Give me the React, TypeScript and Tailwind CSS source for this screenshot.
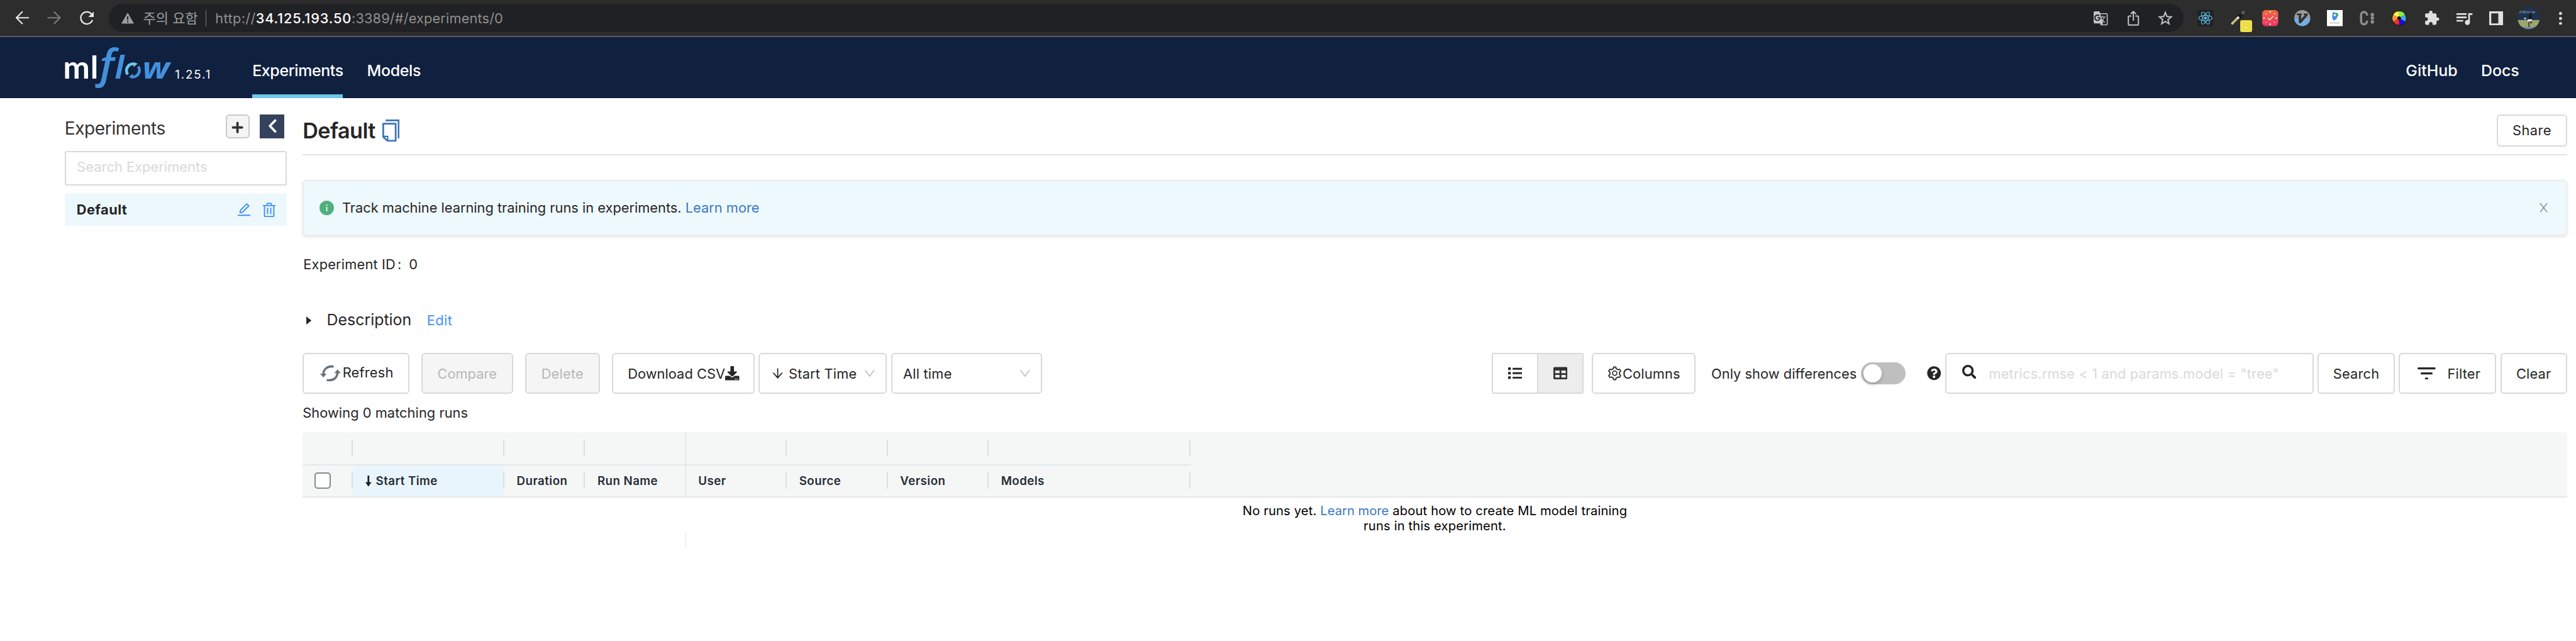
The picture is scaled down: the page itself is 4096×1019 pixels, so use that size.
import type { ReactNode } from "react";
import { AiOutlineArrowDown, AiOutlineDown, AiOutlineEdit, AiOutlineSetting } from "react-icons/ai";
import { FaDownload, FaList, FaQuestionCircle, FaSearch, FaTable } from "react-icons/fa";
import { MdExtension, MdGTranslate, MdQueueMusic } from "react-icons/md";
import { clsx } from "clsx";

/* ---------- browser toolbar ---------- */

function Cell({ children }: { children: ReactNode }) {
  return <div className="relative flex w-[51.34px] shrink-0 items-center justify-center">{children}</div>;
}

function ReactIcon() {
  return (
    <svg viewBox="0 0 32 32" className="size-[25.6px]">
      <rect width="32" height="32" rx="2" fill="#202124" />
      <g fill="none" stroke="#5fc3ea" strokeWidth="1.3">
        <ellipse cx="16" cy="16" rx="13.4" ry="5.2" />
        <ellipse cx="16" cy="16" rx="13.4" ry="5.2" transform="rotate(60 16 16)" />
        <ellipse cx="16" cy="16" rx="13.4" ry="5.2" transform="rotate(120 16 16)" />
      </g>
      <circle cx="16" cy="16" r="2.8" fill="#5fc3ea" />
    </svg>
  );
}

function PickerIcon() {
  return (
    <>
      <svg viewBox="0 0 32 32" className="size-[25.6px]" fill="none" strokeLinecap="round">
        <path d="M4.5 26.5 18 13" stroke="#e8e4d0" strokeWidth="4.4" />
        <path d="M5.5 26 13 18.500" stroke="#b9ab2d" strokeWidth="2.4" />
        <path d="M17 10l5 5M20 12l5-5" stroke="#17191b" strokeWidth="4" />
        <path d="M25.5 5.500l1-1" stroke="#5a5c5e" strokeWidth="6" />
      </svg>
      <div className="absolute top-[32px] left-[28.8px] flex size-[19.25px] items-center justify-center rounded-[3px] bg-[#ecdf4b]">
        <span className="mt-[4px] size-[2px] rounded-full bg-white" />
      </div>
    </>
  );
}

function ClockIcon() {
  return (
    <svg viewBox="0 0 32 32" className="size-[25.6px]" fill="none">
      <defs>
        <linearGradient id="clock" x1="0" y1="0" x2="0" y2="1">
          <stop offset="0" stopColor="#f16b3b" />
          <stop offset="1" stopColor="#ee3268" />
        </linearGradient>
      </defs>
      <rect width="32" height="32" rx="7" fill="url(#clock)" />
      <g fill="#fff">
        <circle cx="16" cy="3.800" r="1.500" />
        <circle cx="16" cy="28.200" r="1.500" />
        <circle cx="3.800" cy="16" r="1.500" />
        <circle cx="28.200" cy="16" r="1.500" />
        <circle cx="7.500" cy="7.500" r="1.100" />
        <circle cx="24.500" cy="7.500" r="1.100" />
        <circle cx="7.500" cy="24.500" r="1.100" />
        <circle cx="24.500" cy="24.500" r="1.100" />
      </g>
      <path d="M11.500 16l3.500 3.500 7-7.500" stroke="#fff" strokeWidth="1.700" />
    </svg>
  );
}

function VimIcon() {
  return (
    <svg viewBox="0 0 32 32" className="size-[25.6px]">
      <path d="M0 16a16 16 0 0 1 32 0z" fill="#9b9b9b" />
      <path d="M0 16a16 16 0 0 0 32 0z" fill="#76aee0" />
      <path d="M5 7h10v3h-1.500v8L21 10h-2V7h8v3L13.500 26H9V10H5z" fill="#303134" />
    </svg>
  );
}

function BirdIcon() {
  return (
    <svg viewBox="0 0 32 32" className="size-[25.6px]">
      <rect width="32" height="32" fill="#fff" />
      <path d="M12 3.500c4 2 7 3 9 6 1 5-3 11-8 11-3-3-3-9-1-17z" fill="#3d8ff0" />
      <path d="M16 6c4-2 7 0 7 6-3-1-5-2-7-6z" fill="#3fb559" />
      <circle cx="15.500" cy="10" r="2.300" fill="#fff" />
      <path d="M6 25.500h20" stroke="#999" strokeWidth="2.500" strokeDasharray="3 1" opacity=".6" />
    </svg>
  );
}

function ColonIcon() {
  return (
    <svg viewBox="0 0 32 32" className="size-[25.6px]" fill="none">
      <path d="M17.500 10.500V9a6.500 6.500 0 0 0-13 0v14a6.500 6.500 0 0 0 13 0v-1.500" stroke="#8c8c8c" strokeWidth="5" transform="translate(0 1.600) scale(.9)" />
      <g fill="#8c8c8c">
        <circle cx="26.500" cy="9" r="3.500" />
        <circle cx="26.500" cy="16" r="3.500" />
        <circle cx="26.500" cy="23.500" r="3.500" />
      </g>
    </svg>
  );
}

function WheelIcon() {
  return (
    <svg viewBox="-16 -16 32 32" className="size-[25.6px]">
      <circle r="14.500" fill="#1d0c05" />
      <path d="M0 0V-13.500A13.500 13.500 0 0 1 11.700-6.750z" fill="#7cf542" />
      <path d="M0 0 11.700-6.750A13.500 13.500 0 0 1 11.700 6.750z" fill="#41a3f5" />
      <path d="M0 0 11.700 6.750A13.500 13.500 0 0 1 0 13.500z" fill="#1d08f5" />
      <path d="M0 0V13.500A13.500 13.500 0 0 1-11.700 6.750z" fill="#ea3323" />
      <path d="M0 0-11.700 6.750A13.500 13.500 0 0 1-11.700-6.750z" fill="#f09437" />
      <path d="M0 0-11.700-6.750A13.500 13.500 0 0 1 0-13.500z" fill="#fdf04e" />
      <circle r="3.600" fill="#1d0c05" />
    </svg>
  );
}

function Avatar() {
  return (
    <svg viewBox="0 0 44 44" className="size-[35.3px]">
      <defs>
        <clipPath id="round">
          <circle cx="22" cy="22" r="22" />
        </clipPath>
      </defs>
      <g clipPath="url(#round)">
        <rect width="44" height="44" fill="#1f3350" />
        <rect y="26" width="44" height="14" fill="#9aa66b" />
        <rect y="39.500" width="44" height="5" fill="#6f8eab" />
        <text x="3" y="12.500" fontSize="8" fill="#a9b3bf" fontFamily="Liberation Serif" textLength="32">
          P.Morgan
        </text>
        <path d="M25 11c3-1 4 3 3 5l1 8-1 2-6 0 1-9z" fill="#15161f" />
        <path d="M20 25l8-1 1 4-9 2z" fill="#e6e6ea" />
        <path d="M22 29l1 11M25 28l3 3-3 1" stroke="#4a2b22" strokeWidth="2" fill="none" />
        <circle cx="15" cy="23" r="2" fill="#b9c7d8" />
        <path d="M30 30l5-2" stroke="#c88" strokeWidth="1.500" />
      </g>
    </svg>
  );
}

function BrowserBar() {
  return (
    <div className="flex h-[59px] shrink-0 border-b-2 border-[#5b5957] bg-[#2d2d2d]">
      <div className="flex w-[173.3px] shrink-0 items-center pl-[24px]">
        <svg viewBox="0 0 28 28" className="size-[22.46px]" fill="none" stroke="#e8e8e8" strokeWidth="2.700" strokeLinecap="round" strokeLinejoin="round">
          <path d="M26.500 14H2.500M14 2.500 2.500 14 14 25.500" />
        </svg>
        <svg viewBox="0 0 28 28" className="ml-[28.9px] size-[22.46px]" fill="none" stroke="#7d7d7d" strokeWidth="2.500" strokeLinecap="round" strokeLinejoin="round">
          <path d="M1.500 14h24M14 2.500 25.500 14 14 25.500" />
        </svg>
        <svg viewBox="0 0 28 28" className="ml-[28.9px] size-[22.46px]" fill="none" stroke="#e8e8e8" strokeWidth="2.800">
          <path d="M25 18.500A12 12 0 1 1 23 6.500" />
          <path d="M28 1v11.500H16.800z" fill="#e8e8e8" stroke="none" />
        </svg>
      </div>
      <div className="mt-[6.4px] flex h-[45px] w-[3298.6px] shrink-0 items-center rounded-full bg-[#202124] pr-[3.2px] pl-[19.3px] font-['Inter','Noto_Sans_CJK_KR',sans-serif] text-[21.8px] whitespace-pre text-[#8f8f90]">
        <svg viewBox="0 0 25 22" className="h-[17.6px] w-[20px] shrink-0">
          <path d="M12.500 0 25 22H0z" fill="#9a9da1" />
          <path d="M12.500 7.500v7M12.500 16.500v3" stroke="#202124" strokeWidth="2.600" />
        </svg>
        <span className="ml-[15px] text-[22px] leading-[30px] text-[#9a9da1]">주의 요함</span>
        <span className="ml-[12px] h-[25.6px] w-[1.6px] bg-[#7b7d80]" />
        <span className="ml-[14px] tracking-[0.35px]">http://</span>
        <span className="font-medium tracking-[0.8px] text-white">34.125.193.50</span>
        <span className="tracking-[0.12px]">:3389/#/experiments/0</span>
        <div className="ml-auto flex h-full text-[#c3c3c4]">
          <Cell>
            <MdGTranslate className="size-[24.4px]" />
          </Cell>
          <Cell>
            <svg viewBox="0 0 28 30" className="h-[24px] w-[22.4px]" fill="none" stroke="currentColor" strokeWidth="2.500" strokeLinejoin="round" strokeLinecap="round">
              <path d="M9 10.500H6A2 2 0 0 0 4 12.500v14A2 2 0 0 0 6 28.500h16a2 2 0 0 0 2-2v-14a2 2 0 0 0-2-2h-3M14 19V2M9.500 6 14 1.500 18.500 6" />
            </svg>
          </Cell>
          <Cell>
            <svg viewBox="0 0 30 30" className="size-[24px]" fill="none" stroke="currentColor" strokeWidth="2.500">
              <path d="M15 3.500l3.200 8 8.600.700-6.600 5.500 2.100 8.400-7.300-4.600-7.300 4.600 2.100-8.400-6.600-5.500 8.600-.700z" />
            </svg>
          </Cell>
        </div>
      </div>
      <div className="ml-[9.6px] flex h-[58px] text-[#e0e0e0]">
        <Cell><ReactIcon /></Cell>
        <Cell><PickerIcon /></Cell>
        <Cell><ClockIcon /></Cell>
        <Cell><VimIcon /></Cell>
        <Cell><BirdIcon /></Cell>
        <Cell><ColonIcon /></Cell>
        <Cell><WheelIcon /></Cell>
        <Cell><MdExtension className="size-[25.5px]" /></Cell>
        <Cell><MdQueueMusic className="size-[32px]" /></Cell>
        <Cell>
          <svg viewBox="0 0 28 28" className="size-[22.5px]">
            <path d="M0 0h28v28H0zM4 4v20h14V4z" fill="#e0e0e0" fillRule="evenodd" />
          </svg>
        </Cell>
        <Cell><Avatar /></Cell>
        <Cell>
          <svg viewBox="0 0 6 26" className="h-[20.9px] w-[4.8px]" fill="#e0e0e0">
            <circle cx="3" cy="3" r="3" />
            <circle cx="3" cy="13" r="3" />
            <circle cx="3" cy="23" r="3" />
          </svg>
        </Cell>
      </div>
    </div>
  );
}

/* ---------- MLflow header ---------- */

function Logo() {
  return (
    <svg viewBox="120 84 220 100" className="ml-[-6.4px] h-[80.2px] w-[176.4px] overflow-visible" fontWeight="700">
      <g fill="#fff" fontFamily="Lato">
        <text x="125.500" y="156" fontSize="63">m</text>
        <text x="179.700" y="156" fontSize="63">l</text>
      </g>
      <g fill="#4291dd" fontFamily="Open Sans" fontStyle="italic">
        <text x="190" y="155" fontSize="84" fontWeight="600">ƒ</text>
        <text x="228" y="156" fontSize="62">l</text>
        <text x="282.500" y="156" fontSize="59" textLength="54" lengthAdjust="spacingAndGlyphs">w</text>
      </g>
      <g fill="none" strokeWidth="5.800">
        <path d="M253.500 148A13.200 13.200 0 0 1 268 127.700" stroke="#6dc8e9" />
        <path d="M274.500 132.400A13.200 13.200 0 0 1 259.500 152.300" stroke="#4291dd" />
      </g>
      <path d="M266 124.300l7.500 2.200-8.500 7.500z" fill="#6dc8e9" />
      <path d="M255.500 153.200l8-7 .500 9z" fill="#4291dd" />
    </svg>
  );
}

function Header() {
  return (
    <header className="flex h-[97px] shrink-0 bg-[#10203f] pl-[102.7px] text-[24.9px] font-medium text-white">
      <div className="flex w-[298.5px] items-start pt-[8px]">
        <Logo />
        <span className="mt-[38px] ml-[5.5px] text-[18.7px] leading-[28px] font-normal tracking-[1.9px]">1.25.1</span>
      </div>
      <nav className="flex gap-[38.4px]">
        <a className="flex w-[144px] border-b-[6px] border-[#6dc8e9] pt-[38px] leading-[30px] tracking-[-0.35px]">Experiments</a>
        <a className="pt-[38px] leading-[30px] tracking-[-0.34px]">Models</a>
      </nav>
      <div className="ml-auto flex pt-[38px] pr-[90px] leading-[30px]">
        <a className="w-[119.7px]">GitHub</a>
        <a className="w-[61px]">Docs</a>
      </div>
    </header>
  );
}

/* ---------- experiments list ---------- */

function TrashIcon() {
  return (
    <svg viewBox="0 0 25 29" className="ml-[17px] h-[23.3px] w-[20px]" fill="none" stroke="currentColor" strokeWidth="2.400">
      <path d="M0 6h25M8 5.500V3.500A2 2 0 0 1 10 1.500h5a2 2 0 0 1 2 2v2M3.200 6.500V26A1.500 1.500 0 0 0 4.700 27.600h15.600a1.500 1.500 0 0 0 1.500-1.500V6.500M9.400 10v13M15.600 10v13" />
    </svg>
  );
}

function Sidebar() {
  return (
    <aside className="flex w-[353px] shrink-0 flex-col pt-[25.5px]">
      <div className="flex h-[38.5px] items-center pr-[4px]">
        <h2 className="pt-[6px] text-[28px] leading-[32px] tracking-[-0.37px] text-[#333]">Experiments</h2>
        <button className="ml-auto flex size-[38.5px] items-center justify-center rounded-[6px] border-2 border-[#cacaca] bg-[#f4f4f4]">
          <svg viewBox="0 0 24 24" className="mt-[3px] size-[19.3px]" stroke="#333" strokeWidth="4.600" strokeLinecap="round">
            <path d="M12 3v18M3 12h18" />
          </svg>
        </button>
        <button className="ml-[16px] flex size-[38.5px] items-center justify-center bg-[#34425d]">
          <svg viewBox="0 0 18 28" className="mt-[-2px] ml-px h-[22.5px] w-[14.4px]" fill="none" stroke="#fff" strokeWidth="4.600" strokeLinecap="round" strokeLinejoin="round">
            <path d="M14.500 3 4 14l10.500 11" />
          </svg>
        </button>
      </div>
      <div className="mt-[20px] flex h-[54.5px] items-center rounded-[3px] border-2 border-[#d9d9d9] pb-[3px] pl-[17.5px] text-[21.8px] tracking-[0.05px] text-[#d9d9d9]">
        Search Experiments
      </div>
      <div className="mt-[13px] flex h-[51.3px] items-center bg-[#edf8fc] pr-[18px] pl-[19px] text-[#4291f7]">
        <span className="text-[21.8px] font-bold tracking-[0.46px] text-[#262626]">Default</span>
        <AiOutlineEdit className="ml-auto size-[26px]" />
        <TrashIcon />
      </div>
    </aside>
  );
}

/* ---------- experiment page ---------- */

function Box({ className, children, disabled, plain }: { className: string; children: ReactNode; disabled?: boolean; plain?: boolean }) {
  return (
    <div
      className={clsx(
        "flex h-[64.2px] shrink-0 items-center rounded-[6px] border-2 border-[#d9d9d9] whitespace-nowrap",
        disabled ? "bg-[#f5f5f5] text-[#b8b8b8]" : "bg-white",
        !disabled && !plain && "shadow-[0_3.2px_0_rgba(0,0,0,0.015)]",
        className,
      )}
    >
      {children}
    </div>
  );
}

function Toolbar() {
  return (
    <div className="mt-[11.3px] flex h-[64.2px] items-center tracking-[0.2px]">
      <Box className="w-[169.3px] pl-[25.5px]">
        <svg viewBox="0 0 41 34" className="h-[27.3px] w-[32.9px]" fill="none" stroke="#66717c" strokeWidth="4.200">
          <path d="M6.500 20C6 9 14 1.500 27 3.500" />
          <path d="M34.500 13C35 25 27 32.500 13 30" />
          <path d="M0 17.500h13L6.500 25z" fill="#66717c" stroke="none" />
          <path d="M28 16.500h13L34.500 9z" fill="#66717c" stroke="none" />
        </svg>
        <span className="ml-[3px] pb-[3px]">Refresh</span>
      </Box>
      <Box className="ml-[19.2px] w-[146px] justify-center tracking-[0.03px]" disabled>Compare</Box>
      <Box className="ml-[19.2px] w-[118.7px] justify-center" disabled>Delete</Box>
      <Box className="ml-[19.3px] w-[227px] pl-[23.2px] tracking-[0.05px]">
        Download CSV
        <FaDownload className="size-[22.5px]" />
      </Box>
      <Box className="ml-[6.4px] w-[203.8px] pl-[16.5px]" plain>
        <AiOutlineArrowDown className="size-[23.2px]" />
        <span className="ml-[6px] tracking-[0.2px]">Start Time</span>
        <AiOutlineDown className="ml-[10px] size-[21.5px] text-[#bfbfbf]" />
      </Box>
      <Box className="ml-[6.4px] w-[240.7px] justify-between pr-[14.5px] pl-[17.5px]" plain>
        All time
        <AiOutlineDown className="size-[21.5px] text-[#bfbfbf]" />
      </Box>

      <div className="ml-auto flex h-full w-[146px] shrink-0 overflow-hidden rounded-[3px] border-2 border-[#d9d9d9]">
        <div className="flex w-[72px] items-center justify-center border-r-2 border-[#d9d9d9]">
          <FaList className="size-[22.5px]" />
        </div>
        <div className="flex flex-1 items-center justify-center bg-[#ededed]">
          <FaTable className="size-[22.5px] text-[#303030]" />
        </div>
      </div>
      <Box className="ml-[12.9px] w-[164.5px] pl-[22px] tracking-[0.14px]">
        <AiOutlineSetting className="size-[25px]" />
        Columns
      </Box>
      <span className="ml-[25.5px] w-[238.4px] shrink-0 tracking-[0.04px] whitespace-nowrap">Only show differences</span>
      <div className="flex h-[35.3px] w-[70.6px] shrink-0 items-center rounded-full bg-[#bfbfbf] px-[3.2px]">
        <span className="size-[28.9px] rounded-full bg-white shadow-[0_3.2px_6.4px_rgba(0,35,11,0.2)]" />
      </div>
      <FaQuestionCircle className="ml-[33.6px] size-[22.5px] shrink-0" />
      <Box className="ml-[6.4px] w-[586.4px] pl-[25px]" plain>
        <FaSearch className="mb-[5px] size-[22.5px]" />
        <span className="ml-[20.5px] tracking-[0.15px] text-[#d9d9d9]">metrics.rmse &lt; 1 and params.model = "tree"</span>
      </Box>
      <Box className="ml-[6.4px] w-[122.5px] justify-center">Search</Box>
      <Box className="ml-[6.7px] w-[154.8px] pl-[28px]">
        <svg viewBox="0 0 36 24" className="h-[19.3px] w-[28.9px]" stroke="#262626" strokeWidth="3.800" strokeLinecap="round">
          <path d="M2 2h32M8 12h20M16.500 22h3" />
        </svg>
        <span className="ml-[18px]">Filter</span>
      </Box>
      <Box className="ml-[6.4px] w-[106px] justify-center">Clear</Box>
    </div>
  );
}

const columns = [
  { label: "", width: "w-[80.2px]" },
  { label: "Start Time", width: "w-[240.6px]", sorted: true },
  { label: "Duration", width: "w-[128.4px]" },
  { label: "Run Name", width: "w-[160.4px]", full: true },
  { label: "User", width: "w-[160.4px]" },
  { label: "Source", width: "w-[160.5px]" },
  { label: "Version", width: "w-[160.4px]" },
  { label: "Models", width: "w-[320.9px]" },
];

function Separator({ full }: { full?: boolean }) {
  return <span className={clsx("ml-auto w-[2px] shrink-0", full ? "h-full bg-[#e6e9e8]" : "h-[25.6px] bg-[#dcdfe0]")} />;
}

function RunsTable() {
  return (
    <div>
      <div className="h-[104px] rounded-t-[6px] border-b-2 border-[#e4e8e7] bg-[#f5f7f7] text-[18.7px] font-semibold tracking-[0.45px] text-[#252c33]">
        <div className="flex h-[53px] w-[1411.8px] border-b-2 border-[#e4e8e7]">
          {columns.map((c, i) => (
            <div key={i} className={clsx("flex shrink-0 items-center", c.width)}>
              <Separator full={c.full} />
            </div>
          ))}
        </div>
        <div className="flex h-[49px]">
          {columns.map((c, i) => (
            <div key={i} className={clsx("flex shrink-0 items-center", c.width, c.sorted && "bg-[#e8f5fd]")}>
              {i === 0 ? (
                <span className="ml-[19px] size-[25.7px] rounded-[5px] border-2 border-[#7f8c8d] bg-white" />
              ) : (
                <span className="flex items-center pt-[2px] pl-[19.5px]">
                  {c.sorted && (
                    <svg viewBox="0 0 12 22" className="mr-[7px] h-[17.6px] w-[9.6px]" fill="#181d1f">
                      <path d="M4.300 0h3.400v13H12l-6 9-6-9h4.300z" />
                    </svg>
                  )}
                  {c.label}
                </span>
              )}
              <Separator full={c.full} />
            </div>
          ))}
        </div>
      </div>
      <div className="relative pt-[9px] text-center text-[20.2px] leading-[24.06px] tracking-[0.15px] text-black">
        <p>
          No runs yet. <a className="tracking-normal text-[#3d78c2]">Learn more</a> about how to create ML model training
        </p>
        <p>runs in this experiment.</p>
        <span className="absolute top-[56.5px] left-[608px] h-[24px] w-[2px] bg-[#f0f1f1]" />
      </div>
    </div>
  );
}

function ExperimentPage() {
  return (
    <main className="ml-[25.6px] flex w-[3600.4px] shrink-0 flex-col text-[21.8px] leading-[30px] text-[#262626]">
      <div className="flex h-[91px] items-start border-b-2 border-[#e2e2e2]">
        <h1 className="mt-[32px] text-[34.2px] leading-[40px] font-semibold tracking-[-0.6px]">Default</h1>
        <svg viewBox="0 0 34 44" className="mt-[34px] ml-[11px] h-[35.3px] w-[27.3px]" fill="none" stroke="#3b73b5" strokeWidth="3.400">
          <path d="M6.500 1.800h25.700V37.500" />
          <path d="M1.700 8.200h24.600v34H10L1.700 34.500z" strokeLinejoin="round" />
          <path d="M2 33.500h8.500v8.500" strokeWidth="2.600" />
        </svg>
        <div className="mt-[25.5px] ml-auto flex h-[51.3px] w-[111.5px] items-center justify-center rounded-[6px] border-2 border-[#d9d9d9] tracking-[0.4px] shadow-[0_3.2px_0_rgba(0,0,0,0.015)]">
          Share
        </div>
      </div>
      <div className="mt-[38.6px] flex h-[89.8px] items-center rounded-[6px] border-2 border-[#ececec] bg-[#eef9fd] pl-[25.2px] shadow-[0_2px_4px_rgba(0,0,0,0.1)]">
        <span className="flex size-[22.5px] items-center justify-center rounded-full bg-[#4fb07c]">
          <svg viewBox="0 0 4 14" className="h-[11.5px] w-[3.3px]" fill="#fff">
            <circle cx="2" cy="1.300" r="1.300" />
            <path d="M1 4.500h2V14H1z" />
          </svg>
        </span>
        <span className="ml-[13px]">
          Track machine learning training runs in experiments. <a className="text-[#3d78c2]">Learn more</a>
        </span>
        <svg viewBox="0 0 16 18" className="mr-[28.5px] ml-auto h-[14.4px] w-[13px]" stroke="#858a8c" strokeWidth="1.900">
          <path d="M1 0l14 18M15 0L1 18" />
        </svg>
      </div>
      <div className="flex h-[90px] items-center pl-px">
        <span className="tracking-[0.18px]">Experiment ID</span>
        <span className="ml-[3px]">:</span>
        <span className="ml-[12px]">0</span>
      </div>
      <div className="flex h-[84.8px] items-center">
        <svg viewBox="0 0 10 16" className="mt-[4px] ml-[5.6px] h-[13px] w-[8.2px]" fill="#262626">
          <path d="M0 0l10 8-10 8z" />
        </svg>
        <span className="ml-[24.5px] text-[24.9px]">Description</span>
        <span className="mt-[2px] ml-[24.5px] tracking-[0.4px] text-[#4291f7]">Edit</span>
      </div>
      <Toolbar />
      <div className="flex h-[61px] items-center tracking-[0.05px]">Showing 0 matching runs</div>
      <RunsTable />
    </main>
  );
}

export default function App() {
  return (
    <div className="flex h-[1019px] w-[4096px] flex-col overflow-hidden bg-white font-['Inter',sans-serif]">
      <BrowserBar />
      <Header />
      <div className="flex flex-1 pl-[102.7px]">
        <Sidebar />
        <ExperimentPage />
      </div>
    </div>
  );
}
